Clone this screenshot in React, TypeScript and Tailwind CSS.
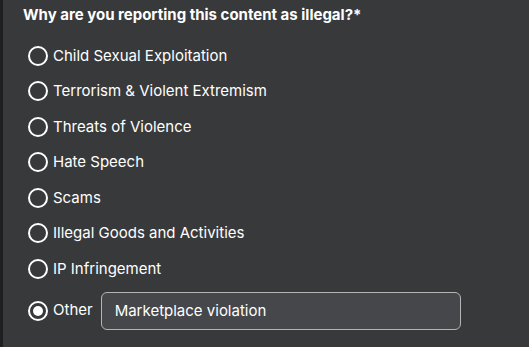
const reasons = [
  "Child Sexual Exploitation",
  "Terrorism & Violent Extremism",
  "Threats of Violence",
  "Hate Speech",
  "Scams",
  "Illegal Goods and Activities",
  "IP Infringement",
];

function Radio({ checked }: { checked?: boolean }) {
  return (
    <span className="flex h-5 w-5 shrink-0 items-center justify-center rounded-full border-2 border-white">
      {checked && <span className="h-[10px] w-[10px] rounded-full bg-white" />}
    </span>
  );
}

export default function App() {
  return (
    <div className="flex h-[347px] w-[529px] bg-[#1e1f21] font-['Inter',sans-serif] text-white">
      <div className="ml-[3px] flex-1 bg-[#38393b] pl-[20px] pt-[5px]">
        <p className="text-[15px] font-bold leading-5">
          Why are you reporting this content as illegal?*
        </p>
        <div className="mt-[13px] flex flex-col pl-[5px]">
          {reasons.map((r) => (
            <label key={r} className="flex h-[35.5px] items-center gap-[5px] text-[15px]">
              <Radio />
              <span>{r}</span>
            </label>
          ))}
          <label className="mt-[5px] flex items-center gap-[5px] text-[15px]">
            <Radio checked />
            <span>Other</span>
            <input
              className="ml-[3px] h-[38px] w-[360px] rounded-md border border-[#b5b5b5] bg-[#45474b] px-[13px] text-[15px] text-white outline-none"
              defaultValue="Marketplace violation"
            />
          </label>
        </div>
      </div>
    </div>
  );
}
